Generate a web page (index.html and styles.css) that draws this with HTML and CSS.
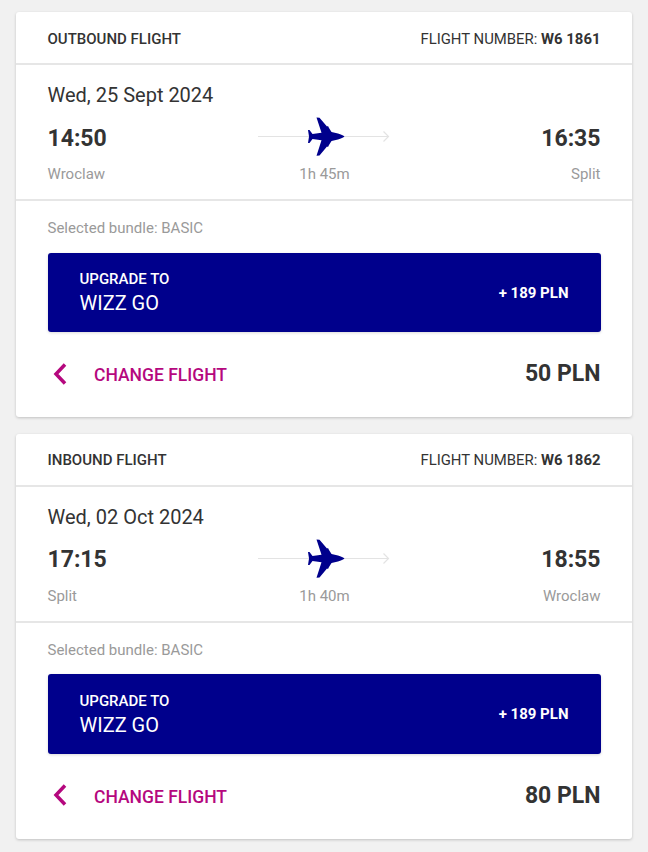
FILE: index.html
```html
<!DOCTYPE html>
<html lang="en">
<head>
<meta charset="utf-8">
<title>Flights</title>
<link rel="stylesheet" href="styles.css">
</head>
<body>
<section class="card">
  <header class="card-head"><span class="head-title">OUTBOUND FLIGHT</span><span class="head-num">FLIGHT NUMBER: <b>W6 1861</b></span></header>
  <div class="info">
    <div class="date">Wed, 25 Sept 2024</div>
    <div class="times">
      <span class="time">14:50</span>
      <svg class="route" width="132" height="40" viewBox="0 0 132 40"><path class="route-line" d="M0 19.500H130M125.500 14.500L130.500 19.500L125.500 24.500"/><path class="plane" d="M50 13L51.500 13L54.500 17L63.500 15.800L58.500 0.500L61.500 0.800L69 9.500L70 9L71 11L73.500 15L80 16.500C83 17.300 85.500 18.500 86.500 19.500C85.500 20.500 83 21.700 80 22.500L73.500 24L71 28L70 30L69 29.500L61.500 38.500L58.500 38.800L63.500 23.200L54.500 22L51.500 26L50 26L51 19.500Z"/></svg>
      <span class="time end">16:35</span>
    </div>
    <div class="places"><span>Wroclaw</span><span class="mid">1h 45m</span><span class="end">Split</span></div>
  </div>
  <div class="bundle">
    <div class="bundle-label">Selected bundle: BASIC</div>
    <div class="upgrade">
      <div><div class="up-small">UPGRADE TO</div><div class="up-big">WIZZ GO</div></div>
      <div class="up-price">+ 189 PLN</div>
    </div>
    <div class="foot">
      <a class="change"><svg class="chev-icon" width="16" height="24" viewBox="0 0 16 24"><path class="chev" d="M14 2.500L5 12L14 21.500"/></svg><span>CHANGE FLIGHT</span></a>
      <span class="price">50 PLN</span>
    </div>
  </div>
</section>
<section class="card">
  <header class="card-head"><span class="head-title">INBOUND FLIGHT</span><span class="head-num">FLIGHT NUMBER: <b>W6 1862</b></span></header>
  <div class="info">
    <div class="date">Wed, 02 Oct 2024</div>
    <div class="times">
      <span class="time">17:15</span>
      <svg class="route" width="132" height="40" viewBox="0 0 132 40"><path class="route-line" d="M0 19.500H130M125.500 14.500L130.500 19.500L125.500 24.500"/><path class="plane" d="M50 13L51.500 13L54.500 17L63.500 15.800L58.500 0.500L61.500 0.800L69 9.500L70 9L71 11L73.500 15L80 16.500C83 17.300 85.500 18.500 86.500 19.500C85.500 20.500 83 21.700 80 22.500L73.500 24L71 28L70 30L69 29.500L61.500 38.500L58.500 38.800L63.500 23.200L54.500 22L51.500 26L50 26L51 19.500Z"/></svg>
      <span class="time end">18:55</span>
    </div>
    <div class="places"><span>Split</span><span class="mid">1h 40m</span><span class="end">Wroclaw</span></div>
  </div>
  <div class="bundle">
    <div class="bundle-label">Selected bundle: BASIC</div>
    <div class="upgrade">
      <div><div class="up-small">UPGRADE TO</div><div class="up-big">WIZZ GO</div></div>
      <div class="up-price">+ 189 PLN</div>
    </div>
    <div class="foot">
      <a class="change"><svg class="chev-icon" width="16" height="24" viewBox="0 0 16 24"><path class="chev" d="M14 2.500L5 12L14 21.500"/></svg><span>CHANGE FLIGHT</span></a>
      <span class="price">80 PLN</span>
    </div>
  </div>
</section>
</body>
</html>
```
FILE: styles.css
```css
* { box-sizing: border-box; }
html, body { height: 100%; overflow: hidden; }
body {
  margin: 0;
  padding: 12px 16px 0;
  background: #f1f1f1;
  font-family: Roboto, "Liberation Sans", sans-serif;
  color: #333;
  display: flex;
  flex-direction: column;
  gap: 16.500px;
}
.card {
  flex: none;
  height: 405px;
  background: #fff;
  border-radius: 3px;
  box-shadow: 0 1px 3px rgba(0,0,0,.2);
}
.card-head {
  height: 53px;
  padding: 2px 31.500px 0;
  display: flex;
  justify-content: space-between;
  align-items: center;
  border-bottom: 2px solid #e6e6e6;
  font-size: 15px;
}
.head-title { font-weight: 500; }
.head-num { font-size: 14.900px; }
.head-num b { font-weight: 700; }
.info {
  height: 136px;
  padding: 18px 31.500px 0;
  border-bottom: 2px solid #e6e6e6;
}
.date { font-size: 20px; line-height: 24px; }
.times {
  margin-top: 10px;
  display: grid;
  grid-template-columns: 1fr auto 1fr;
  align-items: center;
  height: 40px;
}
.time { font-size: 23px; font-weight: 700; line-height: 30px; position: relative; top: 1.500px; }
.end { text-align: right; }
.route-line { fill: none; stroke: #e3e3e3; stroke-width: 1.200; }
.plane { fill: #00008c; }
.places {
  margin-top: 7px;
  display: grid;
  grid-template-columns: 1fr auto 1fr;
  font-size: 15px;
  line-height: 20px;
  color: #9a9a9a;
}
.mid { padding-left: 1px; }
.bundle { padding: 17px 31.500px 0; }
.bundle-label { font-size: 15px; line-height: 20px; color: #9a9a9a; }
.upgrade {
  margin-top: 14.500px;
  height: 79.500px;
  padding: 1px 32px 0;
  background: #00008c;
  border-radius: 3px;
  box-shadow: 0 1px 3px rgba(0,0,0,.15);
  color: #fff;
  display: flex;
  justify-content: space-between;
  align-items: center;
}
.up-small { font-size: 15px; font-weight: 500; line-height: 22px; }
.up-big { font-size: 20px; line-height: 27px; }
.up-price { font-size: 15px; font-weight: 700; }
.foot {
  margin-top: 23.500px;
  height: 36px;
  display: flex;
  justify-content: space-between;
  align-items: center;
}
.change {
  display: flex;
  align-items: center;
  gap: 27px;
  padding: 3px 0 0 3.500px;
  color: #b5087e;
  font-size: 17.500px;
  font-weight: 500;
}
.chev-icon { margin-top: -3px; }
.chev { fill: none; stroke: #b5087e; stroke-width: 3.500; }
.price { font-size: 23px; font-weight: 700; }
```
